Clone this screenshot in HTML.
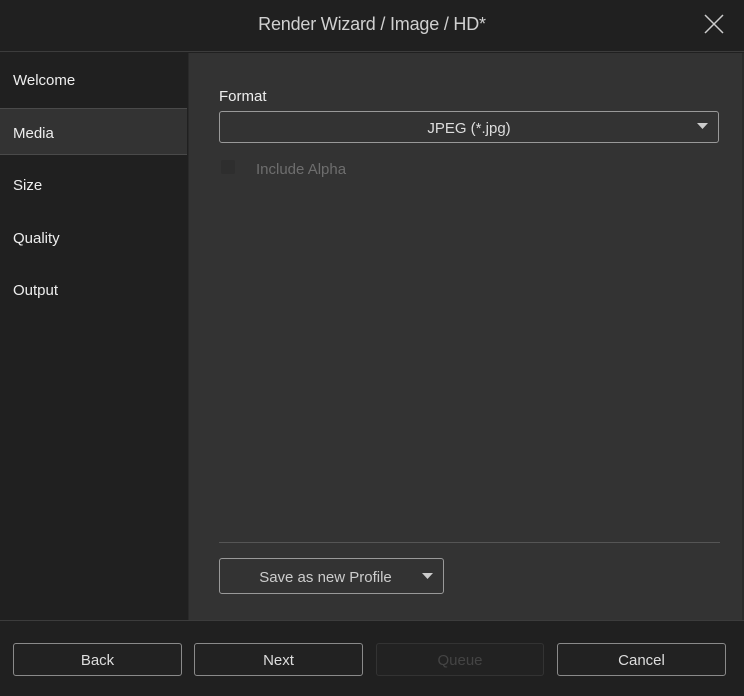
<!DOCTYPE html>
<html><head><style>
*{margin:0;padding:0;box-sizing:border-box}
body{width:744px;height:696px;background:#202020;font-family:"Segoe UI","Liberation Sans",sans-serif;color:#e6e6e6;position:relative;overflow:hidden;font-size:15px}
.abs{position:absolute}
.title{left:0;top:0;width:744px;height:52px;text-align:center;line-height:48px;font-size:18px;color:#d0d0d0;border-bottom:1px solid #3c3c3c;letter-spacing:-0.2px}
.side{left:0;top:53px;width:187px;height:567px;background:#202020}
.item{position:absolute;left:13px;font-size:15px;color:#eee}
.main{left:188px;top:53px;width:554px;height:567px;background:#333;border-left:1px solid #2a2a2a}
.btn{position:absolute;top:643px;height:33px;border:1px solid #8a8a8a;border-radius:3px;background:#222;text-align:center;line-height:33px;color:#ddd;font-size:15px}
</style></head><body>
<div class="abs title">Render Wizard / Image / HD*</div>
<svg class="abs" style="left:703px;top:13px" width="22" height="22"><path d="M2 2L20 20M20 2L2 20" stroke="#ccc" stroke-width="1.5"/></svg>
<div class="abs side">
 <div class="item" style="top:19px">Welcome</div>
 <div style="position:absolute;left:0;top:55px;width:187px;height:47px;background:#333;border-top:1px solid #4a4a4a;border-bottom:1px solid #4a4a4a"></div>
 <div class="item" style="top:72px">Media</div>
 <div class="item" style="top:124px">Size</div>
 <div class="item" style="top:177px">Quality</div>
 <div class="item" style="top:229px">Output</div>
</div>
<div class="abs main">
 <div class="abs" style="left:30px;top:35px;color:#eee">Format</div>
 <div class="abs" style="left:30px;top:58px;width:500px;height:32px;border:1px solid #999;border-radius:3px;background:#333;text-align:center;line-height:33px;color:#ddd">JPEG (*.jpg)</div>
 <svg class="abs" style="left:508px;top:70px" width="11" height="7"><path d="M0 0H11L5.5 6Z" fill="#ccc"/></svg>
 <div class="abs" style="left:32px;top:107px;width:14px;height:14px;background:#2e2e2e;border-radius:2px"></div>
 <div class="abs" style="left:67px;top:108px;color:#6e6e6e">Include Alpha</div>
 <div class="abs" style="left:30px;top:489px;width:501px;height:1px;background:#555"></div>
 <div class="abs" style="left:30px;top:505px;width:225px;height:36px;border:1px solid #999;border-radius:3px;text-align:center;line-height:37px;color:#ccc;padding-right:12px">Save as new Profile</div>
 <svg class="abs" style="left:233px;top:520px" width="11" height="7"><path d="M0 0H11L5.5 6Z" fill="#ccc"/></svg>
</div>
<div class="abs" style="left:742px;top:53px;width:2px;height:567px;background:#2a2a2a"></div>
<div class="abs" style="left:0;top:620px;width:744px;height:1px;background:#3c3c3c"></div>
<div class="btn" style="left:13px;width:169px">Back</div>
<div class="btn" style="left:194px;width:169px">Next</div>
<div class="btn" style="left:376px;width:168px;border-color:#333;color:#444">Queue</div>
<div class="btn" style="left:557px;width:169px">Cancel</div>
</body></html>
